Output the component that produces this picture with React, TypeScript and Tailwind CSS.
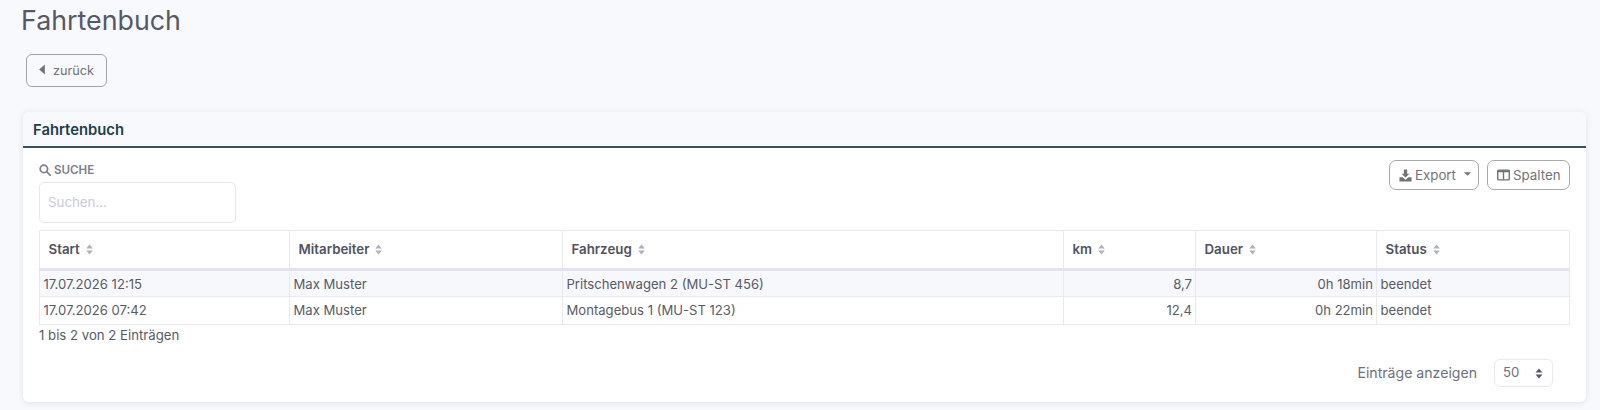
import React from "react";

const SortIcon = () => (
  <svg width="7" height="11" viewBox="0 0 7 11" className="inline-block ml-[6px] align-[-1px] text-[#b0b1bd]" fill="currentColor">
    <path d="M3.5 0.5 L6.8 4.6 H0.2 Z" />
    <path d="M3.5 10.5 L0.2 6.4 H6.8 Z" />
  </svg>
);

const cols: { label: string; width: string }[] = [
  { label: "Start", width: "w-[250px]" },
  { label: "Mitarbeiter", width: "w-[273px]" },
  { label: "Fahrzeug", width: "w-[501px]" },
  { label: "km", width: "w-[132px]" },
  { label: "Dauer", width: "w-[181px]" },
  { label: "Status", width: "w-[193px]" },
];

const rows = [
  ["17.07.2026 12:15", "Max Muster", "Pritschenwagen 2 (MU-ST 456)", "8,7", "0h 18min", "beendet"],
  ["17.07.2026 07:42", "Max Muster", "Montagebus 1 (MU-ST 123)", "12,4", "0h 22min", "beendet"],
];

export default function App() {
  return (
    <div className="w-[1600px] h-[410px] overflow-hidden bg-[#f8f9fd] text-[#585a6a] font-['Inter',sans-serif]">
      <h1 className="m-0 pl-[21px] pt-[2px] h-[54px] text-[26.8px] leading-[36px] font-normal text-[#575867]">Fahrtenbuch</h1>
      <div className="pl-[26px]">
        <button className="flex items-center w-[81px] h-[33px] pl-[12px] border border-[#a3a3a8] rounded-[6px] text-[12.7px] text-[#727379]">
          <svg width="6" height="11" viewBox="0 0 6 11" fill="currentColor" className="mr-[8px] mb-[2px]">
            <path d="M5.8 0.5 V10.5 L0.2 5.5 Z" />
          </svg>
          zurück
        </button>
      </div>
      <div className="mt-[25px] ml-[23px] w-[1563px] h-[290px] rounded-[6px] bg-white shadow-[0_1px_6px_rgba(60,60,90,0.12)] overflow-hidden">
        <div className="h-[36px] bg-[#f8f9fd] border-b-2 border-[#35525f] pl-[10px] pt-[8px] text-[14.8px] leading-[20px] font-semibold text-[#1d3f4c]">
          Fahrtenbuch
        </div>
        <div className="px-[16px]">
          <div className="flex justify-between">
            <div className="pt-[15px]">
              <div className="flex items-center gap-[3px] h-[16px] text-[11.6px] font-semibold text-[#7c7d8e]">
                <svg width="12" height="12" viewBox="0 0 13 13" fill="none" stroke="currentColor" strokeWidth="1.9" className="mb-[2px]">
                  <circle cx="5.3" cy="5.3" r="4" />
                  <path d="M8.4 8.4 L12 12" strokeLinecap="round" />
                </svg>
                SUCHE
              </div>
              <input
                placeholder="Suchen..."
                className="mt-[3px] block w-[197px] h-[41px] px-[8px] pb-[2px] border border-[#e6e7f1] rounded-[5px] bg-white text-[13.3px] outline-none placeholder:text-[#c9cbe2]"
              />
            </div>
            <div className="flex gap-[8px] pt-[12px]">
              <button className="flex items-center w-[90px] h-[30px] pl-[9px] pt-[1px] border border-[#a9a9ad] rounded-[7px] text-[13.3px] text-[#727379]">
                <svg width="13" height="13" viewBox="0 0 14 14" fill="currentColor" className="mr-[3px] mb-[1px]">
                  <path d="M5.2 0.5 H8.8 V5 H11.2 L7 9.2 L2.8 5 H5.2 Z" />
                  <path d="M0.5 9 H4 L7 11.6 L10 9 H13.5 V13.5 H0.5 Z" />
                </svg>
                Export
                <svg width="7" height="4" viewBox="0 0 7 4" fill="currentColor" className="ml-[8px] mb-[3px]">
                  <path d="M0 0.2 H7 L3.5 3.8 Z" />
                </svg>
              </button>
              <button className="flex items-center w-[83px] h-[30px] pl-[9px] pt-[1px] border border-[#a9a9ad] rounded-[7px] text-[13.3px] text-[#727379]">
                <svg width="13" height="12" viewBox="0 0 14 12" fill="none" stroke="currentColor" strokeWidth="1.5" className="mr-[3px] mb-[1px]">
                  <rect x="0.75" y="0.75" width="12.5" height="10.5" rx="1" />
                  <path d="M7 1 V11" />
                  <path d="M1 2 H13" strokeWidth="2" />
                </svg>
                Spalten
              </button>
            </div>
          </div>
          <table className="mt-[7px] w-[1531px] table-fixed border-collapse text-[13.1px]">
            <thead>
              <tr className="h-[39px]">
                {cols.map((c) => (
                  <th key={c.label} className={`${c.width} border border-b-[3px] border-[#e9e9f3] border-b-[#e2e3ef] pl-[8.5px] text-left text-[13.3px] font-semibold text-[#505262]`}>
                    {c.label}
                    <SortIcon />
                  </th>
                ))}
              </tr>
            </thead>
            <tbody>
              {rows.map((r, i) => (
                <tr key={i} className={i === 0 ? "h-[27px] bg-[#f7f8fc]" : "h-[28px] bg-white"}>
                  {r.map((v, j) => (
                    <td key={j} className={`${j === 3 || j === 4 ? "text-right" : "text-left"} ${i === 1 ? "pb-[1px]" : ""} border border-[#e9e9f3] pl-[3.5px] pr-[3px] leading-[16px] text-[#585a6a]`}>
                      {v}
                    </td>
                  ))}
                </tr>
              ))}
            </tbody>
          </table>
          <div className="mt-[1px] h-[18px] text-[13.2px] leading-[18px] text-[#585a6a]">1 bis 2 von 2 Einträgen</div>
          <div className="mt-[15px] flex items-center justify-end pr-[17px]">
            <span className="text-[14.1px] text-[#6d6f7f]">Einträge anzeigen</span>
            <div className="ml-[17px] flex items-center justify-between w-[59px] h-[28px] pl-[8px] pr-[9px] border border-[#e9e9f3] rounded-[6px] text-[13.2px] text-[#6d6f7f]">
              50
              <svg width="8" height="11" viewBox="0 0 8 11" fill="#585a6a">
                <path d="M4 0.5 L7.5 4.5 H0.5 Z" />
                <path d="M4 10.5 L0.5 6.5 H7.5 Z" />
              </svg>
            </div>
          </div>
        </div>
      </div>
    </div>
  );
}
